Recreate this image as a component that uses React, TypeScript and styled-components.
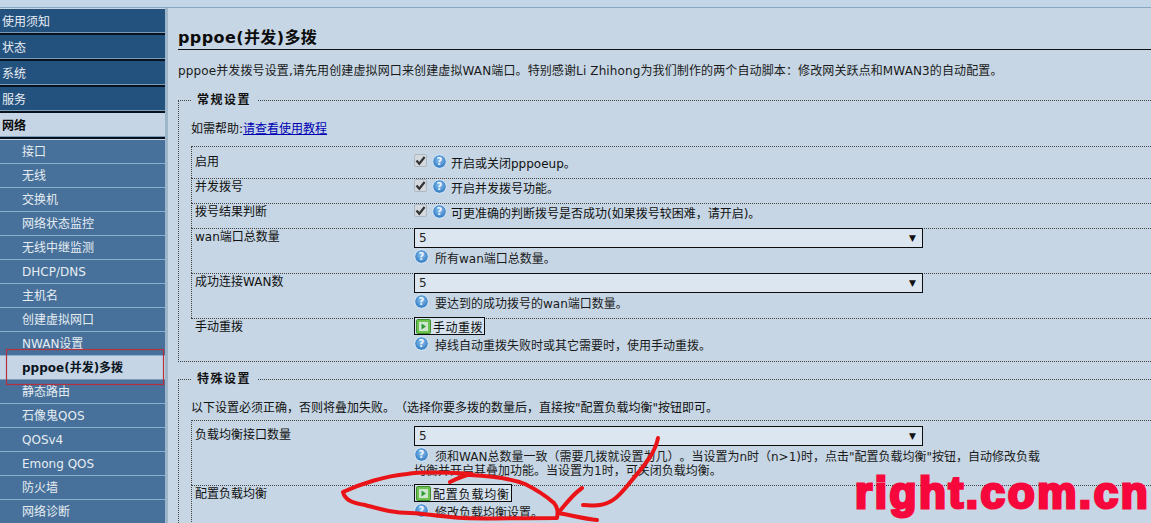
import React from 'react'
import styled, { createGlobalStyle } from 'styled-components'

const Global = createGlobalStyle`
  html, body {
    margin: 0;
    padding: 0;
    background: #c6d6e4;
  }
  body {
    font-family: "DejaVu Sans", "Noto Sans CJK SC", sans-serif;
    font-size: 12px;
    color: #111;
    text-spacing-trim: space-all;
  }
`

const Page = styled.div`
  position: relative;
  width: 1151px;
  height: 523px;
  overflow: hidden;
  display: flex;
  flex-direction: column;
`

const TopStrip = styled.div`
  height: 8px;
  flex: none;
  background: #c3d6e7;
  border-bottom: 1px solid #8aa5be;
  box-sizing: border-box;
`

const Body = styled.div`
  display: flex;
  flex: 1;
  min-height: 0;
`

const Sidebar = styled.nav`
  width: 165px;
  flex: none;
  padding-top: 1px;
  border-right: 3px solid #9fb5c9;
`

const TopItem = styled.div<{ $active?: boolean }>`
  height: 26px;
  box-sizing: border-box;
  padding-left: 2px;
  line-height: 27px;
  color: ${p => (p.$active ? '#0a0a0a' : '#e8eef4')};
  font-weight: ${p => (p.$active ? 'bold' : 'normal')};
  background: ${p => (p.$active ? '#c5d5e5' : '#24527e')};
  border-bottom: 2px solid #08121f;
  box-shadow: inset 0 -1px #7d9cb8;
  margin-bottom: ${p => (p.$active ? '1px' : '0')};
`

const SubItem = styled.div<{ $active?: boolean }>`
  height: 24px;
  box-sizing: border-box;
  padding-left: 22px;
  line-height: 25px;
  color: ${p => (p.$active ? '#0a1420' : '#e6edf3')};
  font-weight: ${p => (p.$active ? 'bold' : 'normal')};
  background: ${p => (p.$active ? '#c5d5e5' : '#47719a')};
  border-bottom: 1px solid ${p => (p.$active ? '#7f9cb7' : '#8db0d0')};
`

const Main = styled.main`
  flex: 1;
  min-width: 0;
  padding: 20px 0 0 10px;
  overflow: hidden;
`

const Title = styled.h2`
  margin: 0;
  font-size: 16px;
  line-height: 20px;
  font-weight: bold;
  letter-spacing: 0.4px;
  color: #0c0c0c;
  border-bottom: 1px solid #111;
  padding-bottom: 1px;
`

const Intro = styled.p`
  margin: 13px 0 0;
  line-height: 16px;
  letter-spacing: 0.12px;
  color: #1a1a1a;
`

const Group = styled.fieldset<{ $first?: boolean }>`
  margin: ${p => (p.$first ? '13px' : '9px')} -20px 0 0;
  padding: 13px 0 0 12px;
  border: 1px dotted #444;
  border-right: none;
  min-width: 0;
`

const GroupName = styled.legend`
  margin-left: 0;
  padding: 0 6px;
  font-weight: bold;
  line-height: 16px;
  letter-spacing: 1.5px;
`

const Note = styled.div`
  line-height: 16px;
`

const HelpLink = styled.a`
  color: #0000b4;
  text-decoration: underline;
`

const Table = styled.div<{ $gap: number }>`
  margin-top: ${p => p.$gap}px;
`

const Row = styled.div<{ $height: number; $pad: number; $last?: boolean }>`
  display: grid;
  grid-template-columns: 222px 1fr;
  height: ${p => p.$height}px;
  box-sizing: border-box;
  padding-top: ${p => p.$pad}px;
  padding-left: ${p => (p.$last ? '1px' : '0')};
  border-top: 1px dotted #444;
  border-left: ${p => (p.$last ? 'none' : '1px dotted #444')};
`

const Label = styled.div`
  padding-left: 3px;
  line-height: 16px;
`

const Value = styled.div`
  min-width: 0;
`

const CheckLine = styled.div`
  display: flex;
  align-items: center;
  gap: 5px;
  height: 16px;
`

const Check = styled.span`
  width: 13px;
  height: 13px;
  flex: none;
  display: flex;
  align-items: center;
  justify-content: center;
  margin-top: -3px;
  background: #d3d9de;
  border: 1px solid #aeb8c2;
  border-radius: 2px;
  box-sizing: border-box;
`

const Select = styled.div`
  width: 509px;
  height: 20px;
  margin-top: -1px;
  box-sizing: border-box;
  padding: 0 6px 0 4px;
  display: flex;
  align-items: center;
  justify-content: space-between;
  background: #dce6f0;
  border: 1px solid #0c0c0c;
  color: #222;
`

const Arrow = styled.span`
  font-size: 9px;
  color: #111;
`

const Hint = styled.div`
  margin-top: 1px;
  line-height: 14px;
  color: #1a1a1a;
  white-space: nowrap;
`

const HintIcon = styled.svg`
  width: 15px;
  height: 15px;
  vertical-align: -1px;
  margin-right: 6px;

  ${CheckLine} & {
    margin-right: 4px;
  }
`

const Action = styled.button<{ $spacing: number }>`
  display: flex;
  align-items: center;
  gap: 2px;
  height: 18px;
  margin: -2px 0 1px;
  padding: 0 1px;
  border: 1px solid #0c0c0c;
  background: #d6e2ed;
  color: #111;
  font: inherit;
  letter-spacing: ${p => p.$spacing}px;
`

const Annotation = styled.svg`
  position: absolute;
  top: 0;
  left: 0;
  width: 1151px;
  height: 523px;
  pointer-events: none;
`

const Watermark = styled.div`
  position: absolute;
  left: 855px;
  top: 469px;
  font-family: "Liberation Sans", sans-serif;
  font-weight: bold;
  font-size: 44px;
  line-height: 48px;
  letter-spacing: 2.6px;
  color: #f7083c;
  -webkit-text-stroke: 3px #f7083c;
  white-space: nowrap;
`

const Help = () => (
  <HintIcon viewBox="0 0 15 15">
    <defs>
      <radialGradient id="helpBlue" cx="50%" cy="40%" r="60%">
        <stop offset="0%" stopColor="#8fc2ee" />
        <stop offset="100%" stopColor="#2a76c0" />
      </radialGradient>
    </defs>
    <circle cx="7.5" cy="7.5" r="6.8" fill="url(#helpBlue)" stroke="#dcebf8" strokeWidth="1" />
    <text x="7.5" y="11.2" textAnchor="middle" fontSize="10" fontWeight="bold" fill="#eef6fc" fontFamily="DejaVu Sans">?</text>
  </HintIcon>
)

const Tick = () => (
  <svg width="11" height="11" viewBox="0 0 11 11">
    <path d="M1.5 5.5 L4.3 8.8 L9.6 2" fill="none" stroke="#333" strokeWidth="2.2" />
  </svg>
)

const Play = () => (
  <svg width="15" height="15" viewBox="0 0 15 15">
    <rect x="0.5" y="0.5" width="14" height="14" rx="1.5" fill="#6fc24f" stroke="#3f8f33" />
    <rect x="3" y="3" width="9" height="9" fill="#cfe6d0" />
    <path d="M5.5 4.5 L10 7.5 L5.5 10.5 Z" fill="#2f9a3a" />
  </svg>
)

const CheckRow = ({ label, text, height, pad }: { label: string; text: string; height: number; pad: number }) => (
  <Row $height={height} $pad={pad}>
    <Label>{label}</Label>
    <Value>
      <CheckLine>
        <Check><Tick /></Check>
        <span><Help />{text}</span>
      </CheckLine>
    </Value>
  </Row>
)

const SelectRow = ({ label, hint }: { label: string; hint: string }) => (
  <Row $height={45} $pad={0}>
    <Label>{label}</Label>
    <Value>
      <Select>5<Arrow>▼</Arrow></Select>
      <Hint><Help />{hint}</Hint>
    </Value>
  </Row>
)

const subItems = [
  '接口', '无线', '交换机', '网络状态监控', '无线中继监测', 'DHCP/DNS', '主机名', '创建虚拟网口',
  'NWAN设置', 'pppoe(并发)多拨', '静态路由', '石像鬼QOS', 'QOSv4', 'Emong QOS', '防火墙', '网络诊断',
]

export default function App() {
  return (
    <Page>
      <Global />
      <TopStrip />
      <Body>
        <Sidebar>
          <TopItem>使用须知</TopItem>
          <TopItem>状态</TopItem>
          <TopItem>系统</TopItem>
          <TopItem>服务</TopItem>
          <TopItem $active>网络</TopItem>
          {subItems.map(name => (
            <SubItem key={name} $active={name.startsWith('pppoe')}>{name}</SubItem>
          ))}
        </Sidebar>
        <Main>
          <Title>pppoe(并发)多拨</Title>
          <Intro>pppoe并发拨号设置,请先用创建虚拟网口来创建虚拟WAN端口。特别感谢Li Zhihong为我们制作的两个自动脚本：修改网关跃点和MWAN3的自动配置。</Intro>

          <Group $first>
            <GroupName>常规设置</GroupName>
            <Note>如需帮助:<HelpLink href="#">请查看使用教程</HelpLink></Note>
            <Table $gap={9}>
              <CheckRow label="启用" text="开启或关闭pppoeup。" height={32} pad={7} />
              <CheckRow label="并发拨号" text="开启并发拨号功能。" height={25} pad={0} />
              <CheckRow label="拨号结果判断" text="可更准确的判断拨号是否成功(如果拨号较困难，请开启)。" height={25} pad={0} />
              <SelectRow label="wan端口总数量" hint="所有wan端口总数量。" />
              <SelectRow label="成功连接WAN数" hint="要达到的成功拨号的wan端口数量。" />
              <Row $height={43} $pad={0} $last>
                <Label>手动重拨</Label>
                <Value>
                  <Action $spacing={0.5}><Play />手动重拨</Action>
                  <Hint><Help />掉线自动重拨失败时或其它需要时，使用手动重拨。</Hint>
                </Value>
              </Row>
            </Table>
          </Group>

          <Group>
            <GroupName>特殊设置</GroupName>
            <Note>以下设置必须正确，否则将叠加失败。（选择你要多拨的数量后，直接按"配置负载均衡"按钮即可。</Note>
            <Table $gap={4}>
              <Row $height={65} $pad={6}>
                <Label>负载均衡接口数量</Label>
                <Value>
                  <Select>5<Arrow>▼</Arrow></Select>
                  <Hint>
                    <Help />须和WAN总数量一致（需要几拨就设置为几）。当设置为n时（n&gt;1)时，点击"配置负载均衡"按钮，自动修改负载
                    <br />
                    均衡并开启其叠加功能。当设置为1时，可关闭负载均衡。
                  </Hint>
                </Value>
              </Row>
              <Row $height={45} $pad={0}>
                <Label>配置负载均衡</Label>
                <Value>
                  <Action $spacing={0.8}><Play />配置负载均衡</Action>
                  <Hint><Help />修改负载均衡设置。</Hint>
                </Value>
              </Row>
            </Table>
          </Group>
        </Main>
      </Body>

      <Annotation viewBox="0 0 1151 523">
        <rect x="6.5" y="349.5" width="157" height="35" fill="none" stroke="#b3313f" strokeWidth="1.2" />
        <g fill="none" stroke="#ea1418" strokeWidth="4" strokeLinecap="round" strokeLinejoin="round">
          <path d="M450 482 C458 478 466 475 472 474 C440 472 420 472 407 474 C385 476 360 484 343 492 C345 500 352 503 365 505 C380 509 392 513 410 513 C430 514 445 517 463 518 C490 519 530 518 557 518 C558 512 558 508 554 503 C545 495 535 489 525 484 C510 478 490 476 470 475" />
          <path d="M658 438 C655 455 640 470 628 485 C618 497 612 503 600 505 C594 506 588 505 583 505" />
          <path d="M582 488 C572 495 565 505 558 513 C570 515 585 519 597 520" />
        </g>
      </Annotation>
      <Watermark>right.com.cn</Watermark>
    </Page>
  )
}
